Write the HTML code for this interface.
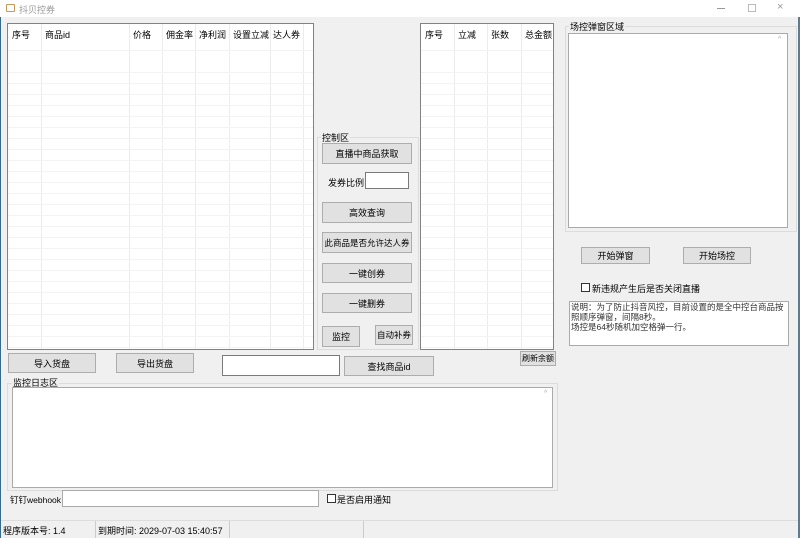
<!DOCTYPE html>
<html><head><meta charset="utf-8"><style>
*{box-sizing:border-box;margin:0;padding:0}
body{width:800px;height:538px;background:#f0f0f0;font-family:"Liberation Sans","Noto Sans CJK SC",sans-serif;font-size:9px;color:#000;position:relative;overflow:hidden;white-space:nowrap}
.a{position:absolute}
.btn{position:absolute;background:#e1e1e1;border:1px solid #adadad;display:flex;align-items:center;justify-content:center;font-size:9px;white-space:nowrap;overflow:hidden}
.inp{position:absolute;background:#fff;border:1px solid #7a7a7a}
.grid{position:absolute;background:#fff;border:1px solid #828282;overflow:hidden}
.gl{position:absolute;top:0;bottom:0;width:1px;background:#ececec}
.hl{position:absolute;left:0;right:0;height:1px;background:#f3f3f3}
.grp{position:absolute;border:1px solid #dcdcdc}
.cb{position:absolute;width:9px;height:9px;border:1px solid #333;background:#fff}
</style></head><body>
<div class="a" style="left:0;top:0;width:800px;height:17px;background:#fff"></div>
<div class="a" style="left:6px;top:4px;width:9px;height:8px;border:1px solid #c89a5a;border-radius:1px"></div>
<div class="a" style="left:19px;top:3px;color:#999">抖贝控券</div>
<div class="a" style="left:717px;top:8px;width:8px;height:1px;background:#999"></div>
<div class="a" style="left:748px;top:4px;width:8px;height:8px;border:1px solid #bbb"></div>
<div class="a" style="left:777px;top:1px;color:#999;font-size:11px">×</div>
<div class="a" style="left:0;top:17px;width:1px;height:521px;background:#3a6a8a"></div>
<div class="a" style="left:798px;top:17px;width:2px;height:521px;background:#5c7c90"></div>

<div class="grid" style="left:7px;top:23px;width:307px;height:327px">
<div class="gl" style="left:33px"></div><div class="gl" style="left:121px"></div><div class="gl" style="left:154px"></div><div class="gl" style="left:187px"></div><div class="gl" style="left:221px"></div><div class="gl" style="left:262px"></div><div class="gl" style="left:295px"></div>
<div class="hl" style="top:26px"></div>
<div class="a" style="left:4px;top:4px">序号</div><div class="a" style="left:37px;top:4px">商品id</div><div class="a" style="left:125px;top:4px">价格</div><div class="a" style="left:158px;top:4px">佣金率</div><div class="a" style="left:191px;top:4px">净利润</div><div class="a" style="left:225px;top:4px">设置立减</div><div class="a" style="left:265px;top:4px">达人券</div>
</div>
<div class="grid" style="left:420px;top:23px;width:134px;height:327px">
<div class="gl" style="left:33px"></div><div class="gl" style="left:66px"></div><div class="gl" style="left:100px"></div>
<div class="hl" style="top:26px"></div>
<div class="a" style="left:4px;top:4px">序号</div><div class="a" style="left:37px;top:4px">立减</div><div class="a" style="left:70px;top:4px">张数</div><div class="a" style="left:104px;top:4px">总金额</div>
</div>
<script>
for(const g of document.querySelectorAll('.grid')){for(let y=48;y<327;y+=11){const d=document.createElement('div');d.className='hl';d.style.top=y+'px';g.appendChild(d);}}
</script>

<div class="grp" style="left:317px;top:137px;width:102px;height:213px"></div>
<div class="a" style="left:321px;top:131px;background:#f0f0f0;padding:0 1px">控制区</div>
<div class="btn" style="left:322px;top:143px;width:90px;height:21px">直播中商品获取</div>
<div class="a" style="left:328px;top:176px">发券比例</div>
<div class="inp" style="left:365px;top:172px;width:44px;height:17px"></div>
<div class="btn" style="left:322px;top:202px;width:90px;height:21px">高效查询</div>
<div class="btn" style="left:322px;top:232px;width:90px;height:21px;font-size:8.5px">此商品是否允许达人券</div>
<div class="btn" style="left:322px;top:263px;width:90px;height:20px">一键创券</div>
<div class="btn" style="left:322px;top:293px;width:90px;height:20px">一键删券</div>
<div class="btn" style="left:322px;top:326px;width:38px;height:21px">监控</div>
<div class="btn" style="left:375px;top:325px;width:38px;height:20px;font-size:8.5px">自动补券</div>

<div class="grp" style="left:565px;top:26px;width:232px;height:206px"></div>
<div class="a" style="left:569px;top:20px;background:#f0f0f0;padding:0 1px">场控弹窗区域</div>
<div class="inp" style="left:568px;top:33px;width:220px;height:195px;border-color:#aaa"></div>
<div class="a" style="left:778px;top:36px;color:#aaa;font-size:7px">^</div>
<div class="btn" style="left:581px;top:247px;width:69px;height:17px">开始弹窗</div>
<div class="btn" style="left:683px;top:247px;width:68px;height:17px">开始场控</div>
<div class="cb" style="left:581px;top:283px"></div>
<div class="a" style="left:592px;top:282px">新违规产生后是否关闭直播</div>
<div class="inp" style="left:569px;top:301px;width:220px;height:45px;border-color:#aaa;padding:0 1px;line-height:10px;font-size:8.5px;color:#333;white-space:normal">说明：为了防止抖音风控，目前设置的是全中控台商品按照顺序弹窗，间隔8秒。<br>场控是64秒随机加空格弹一行。</div>

<div class="btn" style="left:8px;top:353px;width:88px;height:20px">导入货盘</div>
<div class="btn" style="left:116px;top:353px;width:78px;height:20px">导出货盘</div>
<div class="inp" style="left:222px;top:355px;width:118px;height:21px"></div>
<div class="btn" style="left:344px;top:356px;width:90px;height:20px">查找商品id</div>
<div class="btn" style="left:520px;top:351px;width:36px;height:15px;font-size:8px">刷新余额</div>

<div class="grp" style="left:7px;top:383px;width:551px;height:108px"></div>
<div class="a" style="left:12px;top:376px;background:#f0f0f0;padding:0 1px">监控日志区</div>
<div class="inp" style="left:12px;top:387px;width:541px;height:101px;border-color:#aaa"></div>
<div class="a" style="left:544px;top:390px;color:#aaa;font-size:7px">^</div>

<div class="a" style="left:10px;top:494px;font-size:8.5px">钉钉webhook</div>
<div class="inp" style="left:62px;top:490px;width:257px;height:17px;border-color:#aaa"></div>
<div class="cb" style="left:327px;top:494px"></div>
<div class="a" style="left:337px;top:493px">是否启用通知</div>

<div class="a" style="left:1px;top:520px;width:797px;height:1px;background:#ddd"></div>
<div class="a" style="left:3px;top:524px">程序版本号: 1.4</div>
<div class="a" style="left:95px;top:521px;width:1px;height:17px;background:#ccc"></div>
<div class="a" style="left:98px;top:524px">到期时间: 2029-07-03 15:40:57</div>
<div class="a" style="left:229px;top:521px;width:1px;height:17px;background:#ccc"></div>
<div class="a" style="left:363px;top:521px;width:1px;height:17px;background:#ccc"></div>
</body></html>
